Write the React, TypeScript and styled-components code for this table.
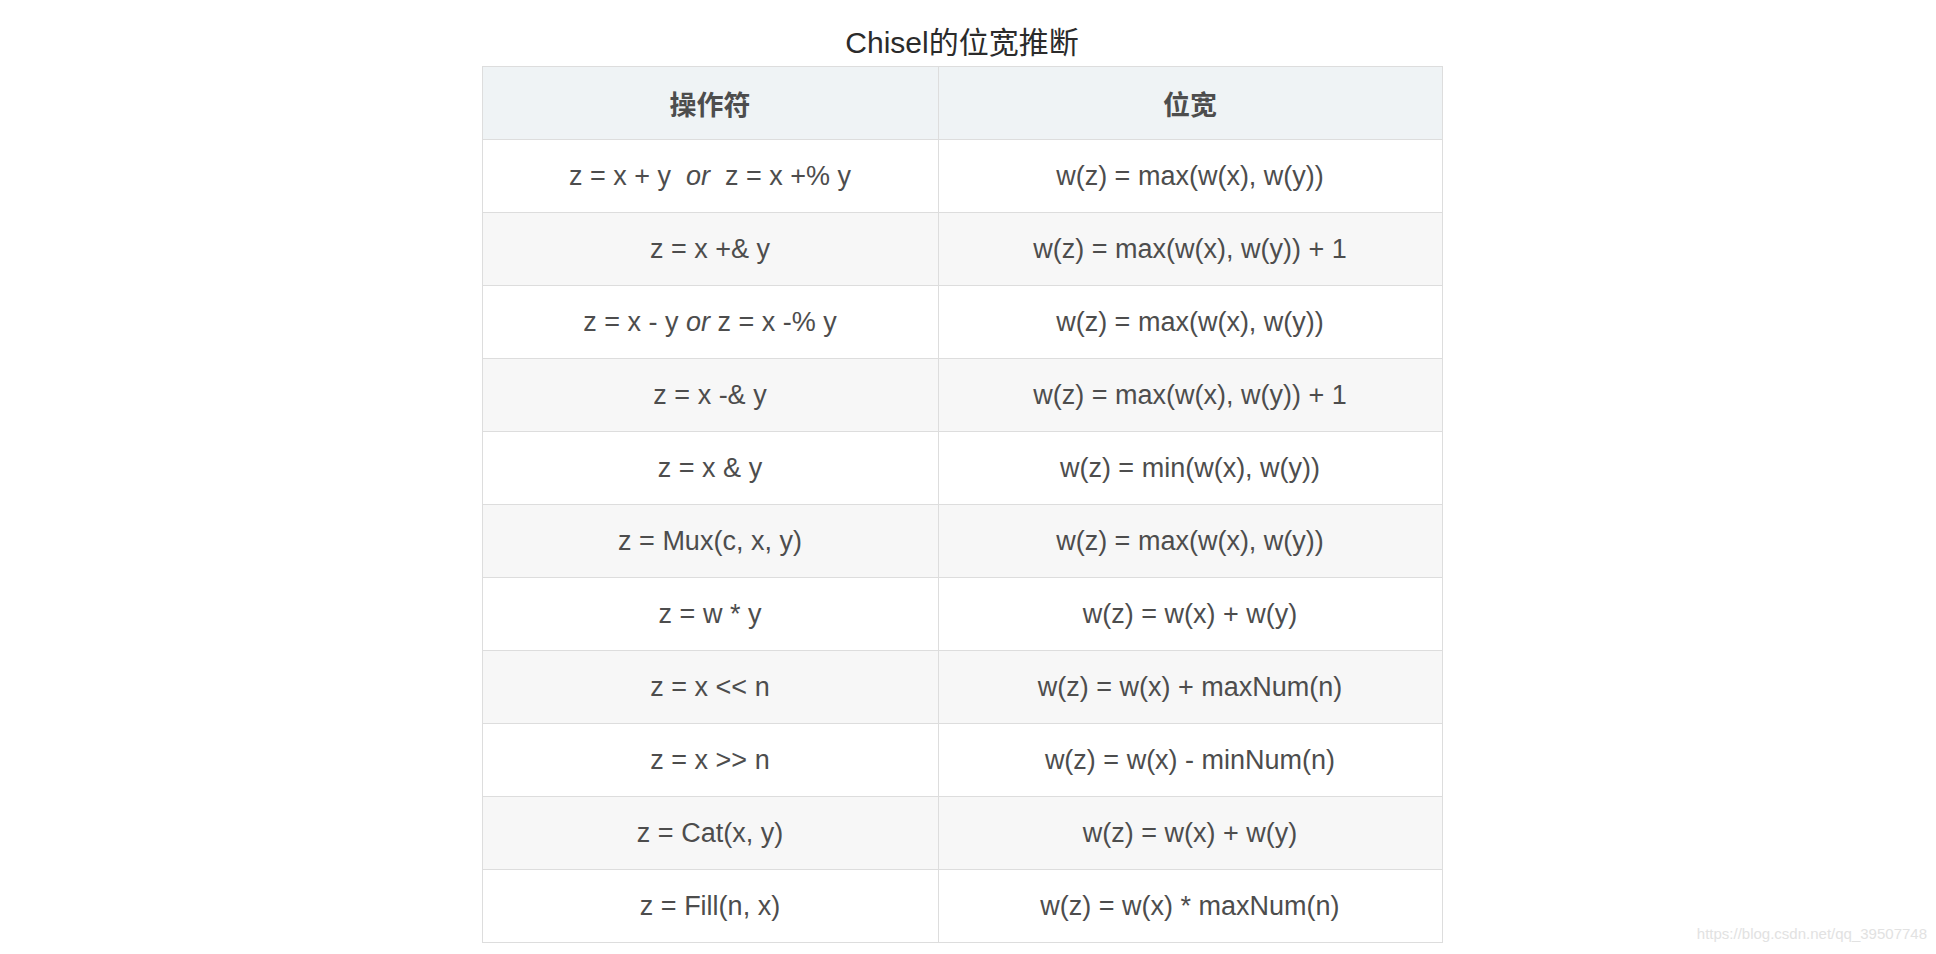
import styled, { createGlobalStyle } from "styled-components";

const GlobalStyle = createGlobalStyle`
  html, body {
    margin: 0;
    padding: 0;
    background: #ffffff;
  }
  body {
    font-family: "Liberation Sans", Arial, "Noto Sans CJK SC", sans-serif;
    color: #4d4d4d;
  }
`;

const Page = styled.main`
  position: relative;
  width: 100%;
  height: 954px;
  box-sizing: border-box;
  padding-right: 12px;
  display: flex;
  flex-direction: column;
  align-items: center;
  overflow: hidden;
`;

const Caption = styled.h2`
  margin: 20px 0 1px;
  font-size: 30px;
  line-height: 45px;
  font-weight: 400;
  color: #2b2b2b;
  font-family: "Liberation Sans", Arial, "Noto Sans CJK SC", sans-serif;
`;

const Table = styled.table`
  width: 961px;
  border-collapse: collapse;
  table-layout: fixed;
  font-size: 27px;
`;

const Th = styled.th`
  height: 72px;
  padding: 0;
  border: 1px solid #dddddd;
  background: #eff3f5;
  font-weight: 700;
  color: #4d4d4d;
  text-align: center;
  font-family: "Noto Sans CJK SC", "Liberation Sans", sans-serif;
`;

const Row = styled.tr<{ $striped: boolean }>`
  background: ${(p) => (p.$striped ? "#f7f7f7" : "#ffffff")};
`;

const Td = styled.td`
  height: 72px;
  padding: 0;
  border: 1px solid #dddddd;
  text-align: center;
  white-space: pre;
  color: #4d4d4d;
`;

const Or = styled.em`
  font-style: italic;
`;

const Watermark = styled.span`
  position: absolute;
  right: 9px;
  bottom: 12px;
  font-size: 15px;
  color: #e2e2e2;
  font-family: "Liberation Sans", Arial, sans-serif;
`;

const rows: [React.ReactNode, string][] = [
  [
    <>
      z = x + y{"  "}
      <Or>or</Or>
      {"  "}z = x +% y
    </>,
    "w(z) = max(w(x), w(y))",
  ],
  ["z = x +& y", "w(z) = max(w(x), w(y)) + 1"],
  [
    <>
      z = x - y <Or>or</Or> z = x -% y
    </>,
    "w(z) = max(w(x), w(y))",
  ],
  ["z = x -& y", "w(z) = max(w(x), w(y)) + 1"],
  ["z = x & y", "w(z) = min(w(x), w(y))"],
  ["z = Mux(c, x, y)", "w(z) = max(w(x), w(y))"],
  ["z = w * y", "w(z) = w(x) + w(y)"],
  ["z = x << n", "w(z) = w(x) + maxNum(n)"],
  ["z = x >> n", "w(z) = w(x) - minNum(n)"],
  ["z = Cat(x, y)", "w(z) = w(x) + w(y)"],
  ["z = Fill(n, x)", "w(z) = w(x) * maxNum(n)"],
];

export default function App() {
  return (
    <>
      <GlobalStyle />
      <Page>
        <Caption>Chisel的位宽推断</Caption>
        <Table>
          <colgroup>
            <col style={{ width: 456 }} />
            <col />
          </colgroup>
          <thead>
            <tr>
              <Th>操作符</Th>
              <Th>位宽</Th>
            </tr>
          </thead>
          <tbody>
            {rows.map(([op, width], i) => (
              <Row key={i} $striped={i % 2 === 1}>
                <Td>{op}</Td>
                <Td>{width}</Td>
              </Row>
            ))}
          </tbody>
        </Table>
        <Watermark>https://blog.csdn.net/qq_39507748</Watermark>
      </Page>
    </>
  );
}
